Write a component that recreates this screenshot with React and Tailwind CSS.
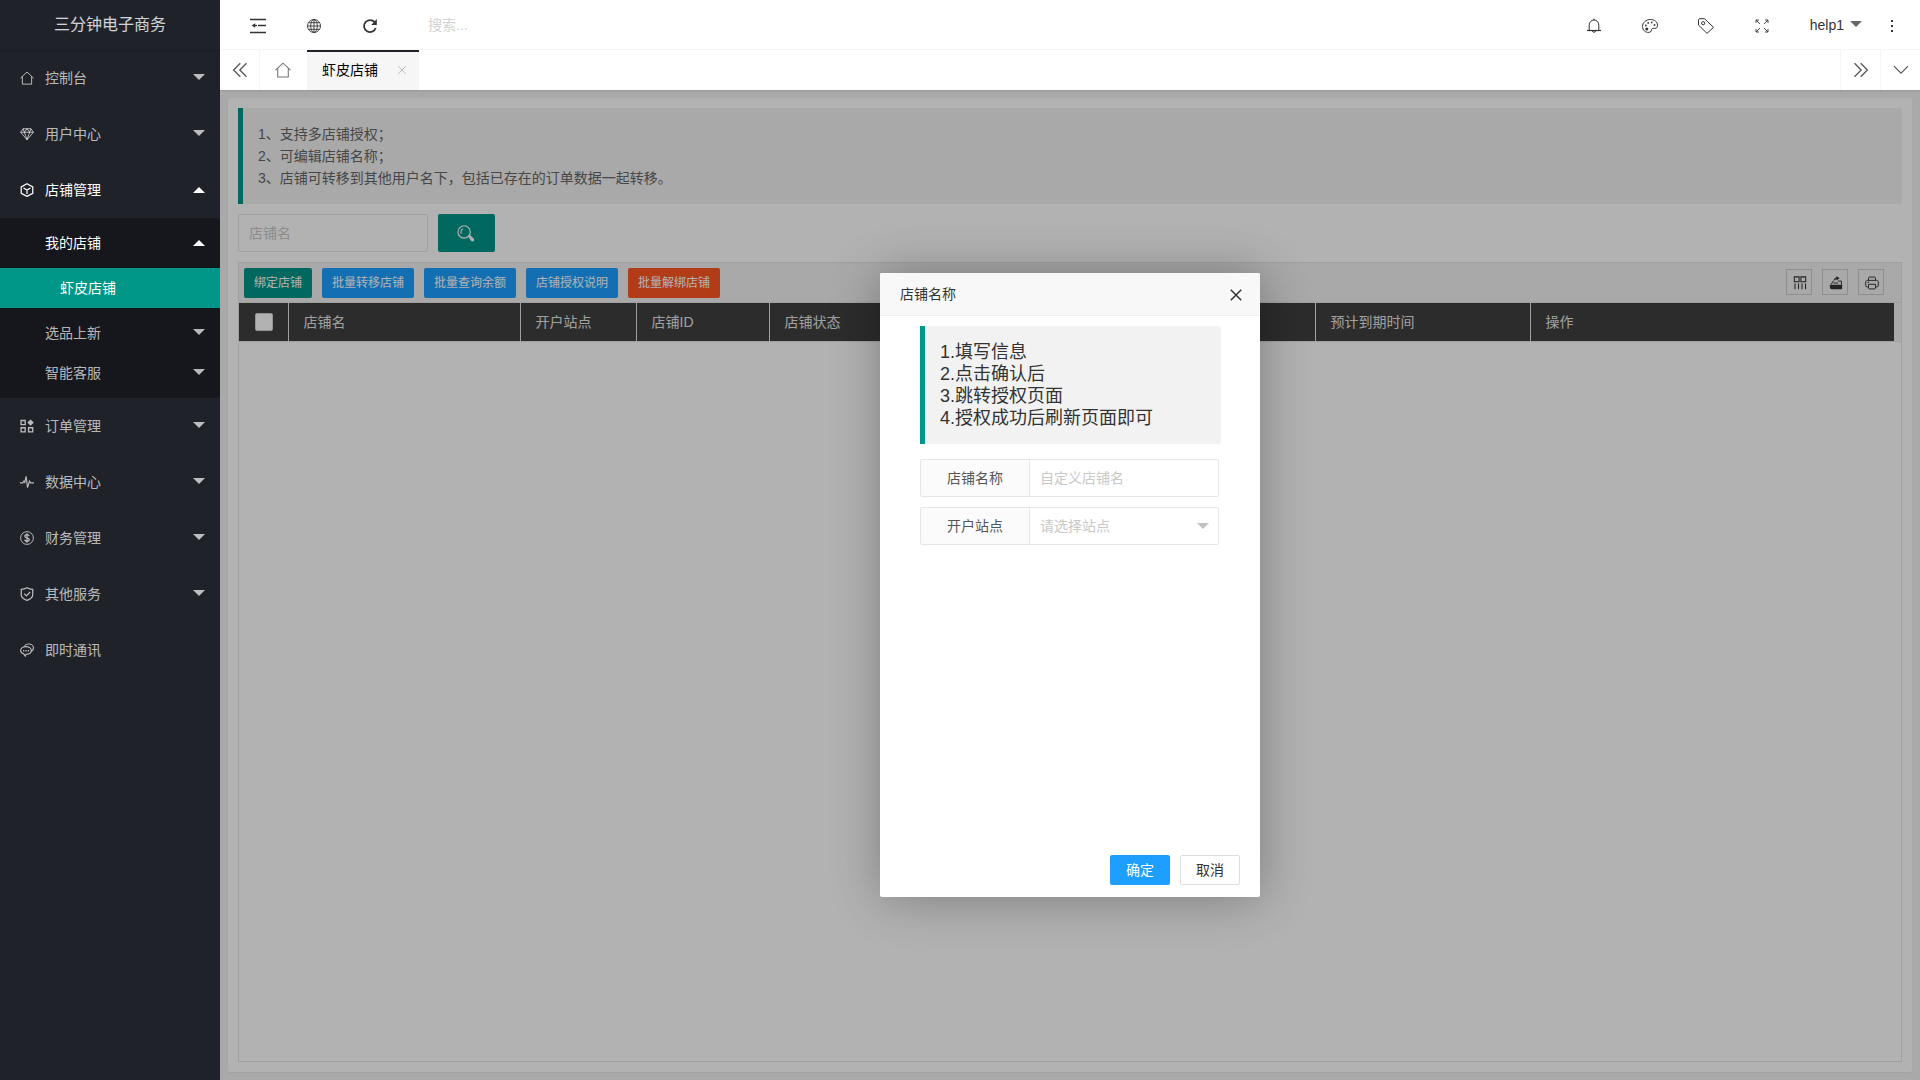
import React from "react";

function Svg({ size = "size-4", children, ...rest }) {
  return (
    <svg viewBox="0 0 16 16" className={`${size} shrink-0`} fill="none" stroke="currentColor" strokeWidth="1.1" aria-hidden="true" {...rest}>
      {children}
    </svg>
  );
}

const HomeIcon = (p) => (
  <Svg {...p}>
    <path d="M.5 8.2 8 1.2l7.500 7M2.700 6.400v8.600h10.600V6.400" />
  </Svg>
);
const DiamondIcon = (p) => (
  <Svg {...p}>
    <path d="M3.500 2h9L15.300 6 8 14.500.7 6zM.7 6h14.600M3.500 2 5 6l3 8.500L11 6l1.500-4M5 6l3-4 3 4" />
  </Svg>
);
const CubeIcon = (p) => (
  <Svg {...p} strokeWidth="1.4">
    <path d="m8 .8 6.600 3.600v7.400L8 15.300 1.400 11.800V4.400zM4 5.700 8 8l4-2.300M8 8v4.500" />
  </Svg>
);
const AppIcon = (p) => (
  <Svg {...p} strokeWidth="1.5">
    <path d="M1.200 1.700h4.700v4.800H1.200zM1.200 10h4.700v4.800H1.200zM9.800 10h4.700v4.800H9.800z" />
    <path d="m12.100.6 3.700 3.500-3.700 3.600-3.700-3.600z" fill="currentColor" stroke="none" />
  </Svg>
);
const PulseIcon = (p) => (
  <Svg {...p} strokeWidth="1.300">
    <path d="M0 9h3.200L4.500 7l1 1.500L7 1.500l1.600 13L10.800 7l1.200 2h4" />
  </Svg>
);
const DollarIcon = (p) => (
  <Svg {...p}>
    <circle cx="8" cy="8" r="7.300" />
    <path d="M10.500 5.700C10.200 4.600 9.200 4.200 8 4.200c-1.500 0-2.500.7-2.500 1.800C5.500 8.600 10.600 7 10.600 9.800c0 1.200-1 2-2.600 2-1.500 0-2.500-.7-2.700-1.900M8 2.700v10.600" strokeWidth="1.400" />
  </Svg>
);
const ShieldIcon = (p) => (
  <Svg {...p} strokeWidth="1.400">
    <path d="M8 .8c2 1.200 4.200 1.700 6.600 1.800v6.200c0 3-3 5.200-6.600 6.500-3.600-1.300-6.600-3.500-6.600-6.500V2.600C3.800 2.500 6 2 8 .8z" />
    <path d="m4.700 7.600 2.600 2.600 4.300-4.500" />
  </Svg>
);
const ChatIcon = (p) => (
  <Svg {...p} strokeWidth="1.300">
    <path d="M6.800 4.200c3.300 0 6.100 1.900 6.100 4.500S10.200 13 6.900 13l-.9 2-1.500-2.300C2.200 12 .7 10.600.7 8.700c0-2.600 2.800-4.500 6.100-4.500z" />
    <path d="M5.300 3c1-1.200 2.800-1.800 4.700-1.800 3 0 5.400 1.800 5.400 4.200 0 2-.9 3.300-2.300 4" />
    <path d="M3.500 8.800h1.400M6.200 8.800h1.400M8.900 8.800h1.400" strokeWidth="1.600" />
  </Svg>
);
const ShrinkIcon = (p) => (
  <Svg {...p} strokeWidth="1.300">
    <path d="M0 1.500h16M8 7.500h8M0 14.500h16" />
    <path d="M5.200 5.200v4.600L1.600 7.500z" fill="currentColor" stroke="none" />
    <path d="M4 7.500h3" />
  </Svg>
);
const GlobeIcon = (p) => (
  <Svg {...p} strokeWidth=".9">
    <circle cx="8" cy="8" r="6.500" />
    <ellipse cx="8" cy="8" rx="3.300" ry="6.500" />
    <path d="M8 1.500v13M1.500 8h13M2.500 4.700h11M2.500 11.300h11" />
  </Svg>
);
const RefreshIcon = (p) => (
  <Svg {...p} strokeWidth="1.800">
    <path d="M12.600 4.200A6 6 0 1 0 13.700 10" />
    <path d="M14.800 1v6H9.200z" fill="currentColor" stroke="none" />
  </Svg>
);
const BellIcon = (p) => (
  <Svg {...p}>
    <path d="M3.200 12V7.200C3.200 4.200 5.200 2 8 2s4.800 2.200 4.800 5.200V12M6.300 13a1.800 1.800 0 0 0 3.400 0M8 .6V2" strokeWidth="1" />
    <path d="M1 12.500h14" strokeWidth="1.200" />
  </Svg>
);
const PaletteIcon = (p) => (
  <Svg {...p} strokeWidth="1">
    <path d="M8.300 1.500c4 0 7.200 2.300 7.200 5.600 0 2.400-1 3.400-2.600 3.300-1.400-.1-2.500-.3-3.200.7-.6 1 .1 3-2.800 3.300C3.300 14.700.5 12 .5 8.600c0-4.200 3.600-7.100 7.800-7.100z" />
    <g fill="currentColor" stroke="none">
      <circle cx="4.800" cy="11" r="1.500" />
      <circle cx="3.900" cy="7.500" r=".9" />
      <circle cx="6.200" cy="4.900" r=".9" />
      <circle cx="9.700" cy="4.400" r=".9" />
      <circle cx="12.500" cy="7" r=".9" />
    </g>
  </Svg>
);
const TagIcon = (p) => (
  <Svg {...p} strokeWidth="1">
    <path d="M.5 2.200C.5 1.200 1 .7 2 .7h4.500l9 8.700-6.500 6L.5 7z" strokeLinejoin="round" />
    <circle cx="5.200" cy="5.200" r="1.600" />
  </Svg>
);
const FullIcon = (p) => (
  <Svg {...p} strokeWidth=".9">
    <path d="M2 5V2h3M2 2l4 4M11 2h3v3M14 2l-4 4M2 11v3h3M2 14l4-4M14 11v3h-3M14 14l-4-4" />
  </Svg>
);
const DotsIcon = (p) => (
  <Svg {...p} fill="currentColor" stroke="none">
    <path d="M7 2h2v2H7zM7 7h2v2H7zM7 12h2v2H7z" />
  </Svg>
);
const PrevIcon = (p) => (
  <Svg {...p} strokeWidth="1.300">
    <path d="M8.300 1.200 1.600 8l6.700 6.800M14.500 1.200 7.800 8l6.700 6.800" />
  </Svg>
);
const NextIcon = (p) => (
  <Svg {...p} strokeWidth="1.300">
    <path d="M1.500 1.200 8.200 8l-6.700 6.800M7.700 1.200 14.400 8l-6.700 6.800" />
  </Svg>
);
const DownIcon = (p) => (
  <Svg {...p} strokeWidth="1.200">
    <path d="M1 4.200 8 11.200l7-7" />
  </Svg>
);
const CrossIcon = (p) => (
  <Svg {...p}>
    <path d="m2 2 12 12M14 2 2 14" />
  </Svg>
);
const SearchIcon = (p) => (
  <Svg {...p}>
    <circle cx="6.700" cy="6.500" r="5.800" />
    <path d="M5.700 3.500a3.300 3.300 0 0 0-1.600 4.700" />
    <path d="m10.800 10.500 1-.9 3.500 3.500a1 1 0 0 1-1.500 1.500z" fill="currentColor" />
  </Svg>
);
const ColsIcon = (p) => (
  <Svg {...p} strokeWidth="1.200">
    <path d="M1.500 1h5.500v5.500H1.500zM9 1h5.500v5.500H9zM2.300 8.500V15M6.300 8.500V15M10.300 8.500V15M14.300 8.500V15" />
  </Svg>
);
const ExportIcon = (p) => (
  <Svg {...p} fill="currentColor" stroke="none">
    <path d="M1 10h14v4a1 1 0 0 1-1 1H3a2 2 0 0 1-2-2z" />
    <path d="M8.500 0 12 2.600 8.500 5.200V3.800C6.800 3.800 6 4.800 5.500 6.500 4.800 4 6 1.900 8.500 1.600z" />
    <path d="M5 5.500 2.500 9.500M10 5.800h4.200V10M5 8h5.500" fill="none" stroke="currentColor" />
  </Svg>
);
const PrintIcon = (p) => (
  <Svg {...p} strokeWidth="1.100">
    <path d="M4 5V2.500C4 1.700 4.500 1.200 5.300 1.200h5.400c.8 0 1.300.5 1.300 1.300V5M4 12.500H2.500c-1 0-1.700-.7-1.700-1.700V7C.8 5.800 1.600 5 2.800 5h10.400c1.200 0 2 .8 2 2v3.800c0 1-.7 1.700-1.700 1.700H12M4 9.500h8v4c0 .8-.5 1.300-1.300 1.300H5.300c-.8 0-1.300-.5-1.300-1.300zM2.800 7.200h2" />
  </Svg>
);

function Caret({ up, className = "" }) {
  return (
    <svg viewBox="0 0 12 6" className={`h-[6px] w-3 shrink-0 ${className}`} fill="currentColor" aria-hidden="true">
      <path d={up ? "M0 6 6 0l6 6z" : "M0 0h12L6 6z"} />
    </svg>
  );
}

function NavItem({ icon: Icon, label, open, leaf }) {
  return (
    <button type="button" aria-expanded={leaf ? undefined : !!open} className={`flex h-14 w-full items-center pr-[15px] pl-5 ${open ? "text-white" : "text-white/70"}`}>
      <Icon size="size-[14px]" />
      <span className="ml-[11px] flex-1 text-left">{label}</span>
      {!leaf && <Caret up={open} className={open ? "" : "mb-0.5"} />}
    </button>
  );
}

function SubItem({ label, open }) {
  return (
    <button type="button" aria-expanded={!!open} className={`flex h-10 w-full items-center pr-[15px] pl-[45px] ${open ? "text-white" : "text-white/70"}`}>
      <span className="flex-1 text-left">{label}</span>
      <Caret up={open} className={open ? "" : "mb-0.5"} />
    </button>
  );
}

function Sidebar() {
  return (
    <aside className="w-[220px] shrink-0 bg-[#20222a] text-sm">
      <h1 className="flex h-[50px] items-center justify-center text-base text-white/80 shadow-[0_1px_2px_0_rgba(0,0,0,0.15)]">
        三分钟电子商务
      </h1>
      <nav>
        <NavItem icon={HomeIcon} label="控制台" />
        <NavItem icon={DiamondIcon} label="用户中心" />
        <NavItem icon={CubeIcon} label="店铺管理" open />
        <div className="rounded-xs bg-black/30 py-[5px]">
          <SubItem label="我的店铺" open />
          <a href="#shop" className="my-[5px] flex h-10 items-center bg-[#009688] pl-[60px] text-white">虾皮店铺</a>
          <SubItem label="选品上新" />
          <SubItem label="智能客服" />
        </div>
        <NavItem icon={AppIcon} label="订单管理" />
        <NavItem icon={PulseIcon} label="数据中心" />
        <NavItem icon={DollarIcon} label="财务管理" />
        <NavItem icon={ShieldIcon} label="其他服务" />
        <NavItem icon={ChatIcon} label="即时通讯" leaf />
      </nav>
    </aside>
  );
}

function HeaderButton({ icon: Icon, label, size }) {
  return (
    <button type="button" aria-label={label} className="flex h-full w-14 items-center justify-center pt-[3px]">
      <Icon size={size} />
    </button>
  );
}

function Header() {
  return (
    <header className="flex h-[50px] items-center border-b border-[#f6f6f6] bg-white pl-[10px] text-sm text-[#333]">
      <HeaderButton icon={ShrinkIcon} label="侧边伸缩" />
      <HeaderButton icon={GlobeIcon} label="前台" />
      <HeaderButton icon={RefreshIcon} label="刷新" />
      <input aria-label="搜索" placeholder="搜索..." className="ml-[30px] w-40 pt-px outline-none placeholder:text-[#d2d2d2]" />
      <div className="ml-auto flex h-full items-center pr-[22px]">
        <HeaderButton icon={BellIcon} label="消息" />
        <HeaderButton icon={PaletteIcon} label="主题" />
        <HeaderButton icon={TagIcon} label="便签" />
        <HeaderButton icon={FullIcon} label="全屏" />
        <button type="button" className="flex h-full items-center gap-[6px] px-5">
          help1
          <Caret className="mb-0.5 text-[#666]" />
        </button>
        <button type="button" aria-label="更多" className="flex h-full w-4 items-center justify-center pt-[3px] pl-1">
          <DotsIcon />
        </button>
      </div>
    </header>
  );
}

function TabBar() {
  return (
    <div className="relative z-10 flex h-10 bg-white text-sm text-[#555] shadow-[0_1px_2px_0_rgba(0,0,0,0.1)]">
      <button type="button" aria-label="向左" className="flex w-10 items-center justify-center border-r border-[#f6f6f6]"><PrevIcon /></button>
      <button type="button" aria-label="首页" className="flex w-[47px] items-center justify-center pr-0.5 text-[#777]"><HomeIcon /></button>
      <div className="flex w-28 items-center border-t-2 border-[#20222a] bg-[#f6f6f6] pr-3 pb-0.5 pl-[15px] text-black">
        <span className="flex-1">虾皮店铺</span>
        <button type="button" aria-label="关闭标签" className="text-[#bbb]"><CrossIcon size="size-[10px]" strokeWidth="1.600" /></button>
      </div>
      <button type="button" aria-label="向右" className="ml-auto flex w-10 items-center justify-center border-l border-[#f6f6f6]"><NextIcon /></button>
      <button type="button" aria-label="标签操作" className="flex w-10 items-center justify-center border-l border-[#f6f6f6]"><DownIcon /></button>
    </div>
  );
}

const actions = [
  ["绑定店铺", "bg-[#009688]"],
  ["批量转移店铺", "bg-[#1e9fff]"],
  ["批量查询余额", "bg-[#1e9fff]"],
  ["店铺授权说明", "bg-[#1e9fff]"],
  ["批量解绑店铺", "bg-[#ff5722]"],
];

const columns = [
  ["店铺名", "w-[232px]"],
  ["开户站点", "w-[116px]"],
  ["店铺ID", "w-[133px]"],
  ["店铺状态", ""],
  ["预计到期时间", "w-[215px]"],
  ["操作", "w-[364px]"],
];

const tools = [
  ["筛选列", ColsIcon],
  ["导出", ExportIcon],
  ["打印", PrintIcon],
];

function ShopPanel() {
  return (
    <section className="flex flex-1 flex-col rounded-xs bg-white p-[10px] text-sm shadow-[0_1px_2px_0_rgba(0,0,0,0.05)]">
      <blockquote className="rounded-r-xs border-l-[5px] border-[#009688] bg-[#f2f2f2] p-[15px] leading-[22px] text-[#666]">
        <p>1、支持多店铺授权；</p>
        <p>2、可编辑店铺名称；</p>
        <p>3、店铺可转移到其他用户名下，包括已存在的订单数据一起转移。</p>
      </blockquote>
      <form className="mt-[10px] flex gap-[10px]">
        <input aria-label="店铺名" placeholder="店铺名" className="h-[38px] w-[190px] rounded-xs border border-[#e6e6e6] px-[10px] placeholder:text-[#c8c8c8]" />
        <button type="button" aria-label="搜索店铺" className="flex h-[38px] w-[57px] items-center justify-center rounded-xs bg-[#009688] pr-0.5 text-white">
          <SearchIcon size="size-[17px]" />
        </button>
      </form>
      <div className="mt-[10px] flex-1 border border-[#e6e6e6]">
        <div className="flex h-[39px] items-start gap-[10px] bg-[#f2f2f2] pt-[5px] pr-[17px] pl-[5px] text-xs text-white">
          {actions.map(([label, color]) => (
            <button key={label} type="button" className={`h-[30px] rounded-xs px-[10px] ${color}`}>{label}</button>
          ))}
          <div className="ml-auto flex gap-[10px] pt-px text-[#333]">
            {tools.map(([label, Icon]) => (
              <button key={label} type="button" aria-label={label} className="flex size-[26px] items-center justify-center border border-[#ccc] pt-0.5 pl-0.5">
                <Icon size="size-[14px]" />
              </button>
            ))}
          </div>
        </div>
        <div className="border-y border-[#e6e6e6] bg-[#f2f2f2] pr-[7px]">
          <table className="w-full table-fixed border-collapse bg-[#3f3f3f] text-left text-[#e6e6e6]">
            <thead>
              <tr className="h-[38px]">
                <th className="w-[49px] border-r border-[#e6e6e6] pl-4">
                  <input type="checkbox" aria-label="全选" className="block size-[18px] appearance-none rounded-xs border border-[#d2d2d2] bg-white" />
                </th>
                {columns.map(([label, width]) => (
                  <th key={label} className={`border-r border-[#e6e6e6] px-[15px] font-normal last:border-r-0 ${width}`}>{label}</th>
                ))}
              </tr>
            </thead>
          </table>
        </div>
      </div>
    </section>
  );
}

function ShopDialog() {
  return (
    <div className="absolute inset-0 flex items-center justify-center bg-black/30">
      <div role="dialog" aria-labelledby="dlg-title" className="flex h-[624px] w-[380px] flex-col rounded-xs bg-white text-sm shadow-[1px_1px_50px_rgba(0,0,0,0.3)]">
        <div className="flex h-[43px] items-center justify-between rounded-t-xs border-b border-[#eee] bg-[#f8f8f8] pr-[17px] pl-5 text-[#333]">
          <h2 id="dlg-title">店铺名称</h2>
          <button type="button" aria-label="关闭" className="pt-0.5"><CrossIcon size="size-[14px]" strokeWidth="1.700" /></button>
        </div>
        <div className="flex-1 px-10 pt-[10px]">
          <blockquote className="-mr-px rounded-r-xs border-l-[5px] border-[#009688] bg-[#f2f2f2] p-[15px] text-lg leading-[22px] text-[#333]">
            <p>1.填写信息</p>
            <p>2.点击确认后</p>
            <p>3.跳转授权页面</p>
            <p>4.授权成功后刷新页面即可</p>
          </blockquote>
          <div className="mt-[15px] mr-px flex h-[38px] rounded-xs border border-[#e6e6e6]">
            <label htmlFor="shop-name" className="flex w-[109px] shrink-0 items-center justify-center border-r border-[#e6e6e6] bg-[#fbfbfb] text-[#555]">店铺名称</label>
            <input id="shop-name" placeholder="自定义店铺名" className="min-w-0 flex-1 px-[10px] outline-none placeholder:text-[#c8c8c8]" />
          </div>
          <div className="relative mt-[10px] mr-px flex h-[38px] items-center rounded-xs border border-[#e6e6e6]">
            <label htmlFor="shop-site" className="flex h-full w-[109px] shrink-0 items-center justify-center border-r border-[#e6e6e6] bg-[#fbfbfb] text-[#555]">开户站点</label>
            <select id="shop-site" className="h-full min-w-0 flex-1 appearance-none px-[10px] text-[#c8c8c8] outline-none">
              <option>请选择站点</option>
            </select>
            <Caret className="pointer-events-none absolute right-[9px] text-[#c2c2c2]" />
          </div>
        </div>
        <div className="flex justify-end gap-[10px] px-5 pb-3">
          <button type="button" className="h-[30px] w-[60px] rounded-xs bg-[#1e9fff] text-white">确定</button>
          <button type="button" className="h-[30px] w-[60px] rounded-xs border border-[#dedede] text-[#333]">取消</button>
        </div>
      </div>
    </div>
  );
}

export default function App() {
  return (
    <div className="flex min-h-screen font-['Liberation_Sans','Noto_Sans_CJK_SC',sans-serif]">
      <Sidebar />
      <div className="flex min-w-0 flex-1 flex-col">
        <Header />
        <TabBar />
        <main className="relative flex flex-1 flex-col bg-[#f2f2f2] p-2">
          <ShopPanel />
          <ShopDialog />
        </main>
      </div>
    </div>
  );
}
